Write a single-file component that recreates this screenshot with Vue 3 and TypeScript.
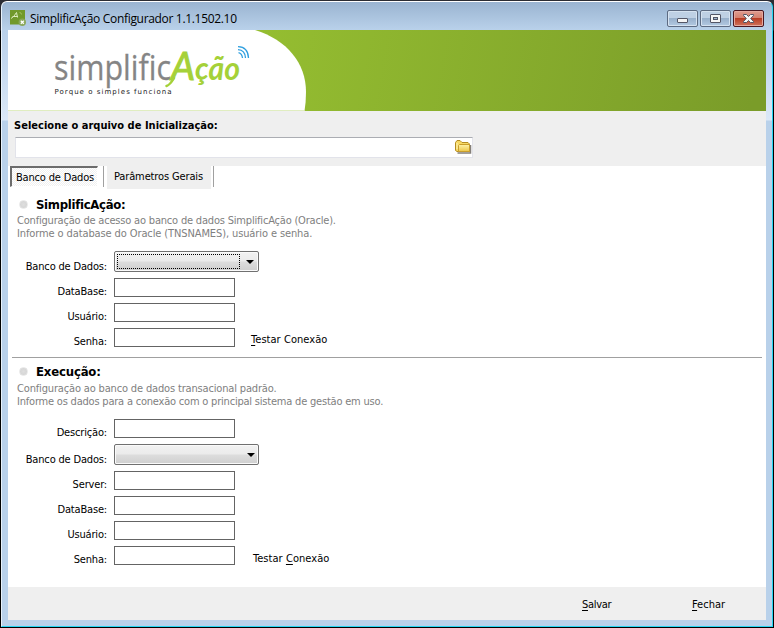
<script setup lang="ts">
import { ref } from 'vue'

interface Field {
  label: string
  kind: 'text' | 'combo'
  focused?: boolean
  action?: { before: string; key: string; after: string }
}
interface Section {
  id: string
  title: string
  lines: string[]
  fields: Field[]
}

const activeTab = ref(0)

const sections: Section[] = [
  {
    id: 'app',
    title: 'SimplificAção:',
    lines: [
      'Configuração de acesso ao banco de dados SimplificAção (Oracle).',
      'Informe o database do Oracle (TNSNAMES), usuário e senha.',
    ],
    fields: [
      { label: 'Banco de Dados:', kind: 'combo', focused: true },
      { label: 'DataBase:', kind: 'text' },
      { label: 'Usuário:', kind: 'text' },
      { label: 'Senha:', kind: 'text', action: { before: '', key: 'T', after: 'estar Conexão' } },
    ],
  },
  {
    id: 'exec',
    title: 'Execução:',
    lines: [
      'Configuração ao banco de dados transacional padrão.',
      'Informe os dados para a conexão com o principal sistema de gestão em uso.',
    ],
    fields: [
      { label: 'Descrição:', kind: 'text' },
      { label: 'Banco de Dados:', kind: 'combo' },
      { label: 'Server:', kind: 'text' },
      { label: 'DataBase:', kind: 'text' },
      { label: 'Usuário:', kind: 'text' },
      { label: 'Senha:', kind: 'text', action: { before: 'Testar ', key: 'C', after: 'onexão' } },
    ],
  },
]
</script>

<template>
  <div class="desktop">
    <div class="window">
      <header class="titlebar">
        <svg class="app-icon" width="16" height="16" viewBox="0 0 16 16">
          <rect width="15" height="14.500" fill="#71992b" />
          <path d="M1 8.500 Q4 7 6.500 2.500 L7.500 7.500 M2.500 6.500 H8" fill="none" stroke="#dcebbd" stroke-width="1" />
          <path d="M9.500 2.500 q2 0 2 2" fill="none" stroke="#a9c86c" stroke-width=".8" />
          <circle cx="12.300" cy="12.300" r="3.700" fill="#8aa85a" />
          <path d="M10.800 10.800 l3 3 M13.800 10.800 l-3 3" stroke="#fff" stroke-width="1.300" />
        </svg>
        <span class="caption">SimplificAção Configurador 1.1.1502.10</span>
        <div class="controls">
          <button class="ctl" type="button">
            <svg class="min" width="13" height="7" viewBox="0 0 13 7"><rect x="1.500" y="1.500" width="10" height="4" rx=".5" fill="#f4f4f4" stroke="#535666" /></svg>
          </button>
          <button class="ctl" type="button">
            <svg width="13" height="11" viewBox="0 0 13 11"><rect x="1.500" y="1.500" width="10" height="8" rx=".5" fill="#f6f6f6" stroke="#535666" /><rect x="4.500" y="4.500" width="4" height="2" fill="#9fb5cd" stroke="#535666" /></svg>
          </button>
          <button class="ctl close" type="button">
            <svg width="13" height="11" viewBox="0 0 13 11"><path d="M1.500 1.500 H4.500 L6.500 3.500 L8.500 1.500 H11.500 V2.500 L8.700 5.500 L11.500 8.500 V9.500 H8.500 L6.500 7.500 L4.500 9.500 H1.500 V8.500 L4.300 5.500 L1.500 2.500 Z" fill="#f6f6f6" stroke="#535666" /></svg>
          </button>
        </div>
      </header>

      <main class="client">
        <div class="banner">
          <svg width="758" height="81" viewBox="0 0 758 81">
            <defs>
              <linearGradient id="green" x1="0" y1="0" x2="1" y2=".02">
                <stop offset=".3" stop-color="#96bf31" />
                <stop offset="1" stop-color="#7a9c29" />
              </linearGradient>
            </defs>
            <rect width="758" height="81" fill="url(#green)" />
            <path d="M0 0 H247 C279 10 298 33 298 62 Q298 72 296.500 81 H0 Z" fill="#fff" />
            <path d="M0 80.500 H296" stroke="#e0edc0" />
            <text class="logo-gray" x="46" y="50" textLength="117" lengthAdjust="spacingAndGlyphs">simplific</text>
            <text class="logo-green capital" x="163" y="50" textLength="24" lengthAdjust="spacingAndGlyphs">A</text>
            <text class="logo-green" x="187" y="50" textLength="45" lengthAdjust="spacingAndGlyphs">ção</text>
            <path d="M158.500 56 Q162 55 166 48" fill="none" stroke="#a5d138" stroke-width="2.500" stroke-linecap="round" />
            <text class="tagline" x="46.500" y="64" textLength="117">Porque o simples funciona</text>
            <g fill="none" stroke="#2f9fdf" stroke-width="1.300">
              <path d="M230 16.700 Q240 17 240.500 28" />
              <path d="M230 19.700 Q237 20 237.500 28" />
              <path d="M230.500 22.700 Q234 23.500 234.500 28" />
            </g>
          </svg>
        </div>

        <section class="file-panel">
          <label class="file-label">Selecione o arquivo de Inicialização:</label>
          <div class="file-box">
            <svg width="17" height="15" viewBox="0 0 17 15">
              <defs>
                <linearGradient id="folder" x1="0" y1="0" x2="0" y2="1">
                  <stop offset="0" stop-color="#fff3a8" />
                  <stop offset="1" stop-color="#ecc649" />
                </linearGradient>
              </defs>
              <path d="M2.500 13 H15.500 V5" fill="none" stroke="#85807a" stroke-width="1.500" />
              <path d="M.5 10.500 V2.500 L2 .5 H5 L7 2.500 H13 L14.500 4 V11.500 H2 Z" fill="#f7d964" stroke="#b48c22" />
              <path d="M3.500 11.500 V5.500 L4.500 4.500 H14.500 V11.500 Z" fill="url(#folder)" stroke="#c99e2c" />
              <path d="M2 3 V9" stroke="#fff5b8" />
            </svg>
          </div>
        </section>

        <nav class="tabs">
          <button class="tab" :class="{ active: activeTab === 0 }" type="button" @click="activeTab = 0">Banco de Dados</button>
          <i class="divider"></i>
          <button class="tab second" :class="{ active: activeTab === 1 }" type="button" @click="activeTab = 1">Parâmetros Gerais</button>
          <i class="divider"></i>
        </nav>

        <section v-for="s in sections" :key="s.id" class="group" :class="s.id">
          <h2><i class="dot"></i><span>{{ s.title }}</span></h2>
          <p v-for="(l, i) in s.lines" :key="l" :class="'line' + i">{{ l }}</p>
          <div class="fields">
            <div v-for="f in s.fields" :key="f.label" class="field" :class="f.kind">
              <span class="label">{{ f.label }}</span>
              <div v-if="f.kind === 'combo'" class="combo-box" :class="{ focused: f.focused }">
                <span class="combo-value"></span>
                <svg width="8" height="4" viewBox="0 0 8 4"><path d="M0 0 H8 L4 4 Z" fill="#000" /></svg>
              </div>
              <div v-else class="input"></div>
              <span v-if="f.action" class="action">{{ f.action.before }}<u>{{ f.action.key }}</u>{{ f.action.after }}</span>
            </div>
          </div>
        </section>

        <footer class="footer">
          <span class="save"><u>S</u>alvar</span>
          <span class="exit"><u>F</u>echar</span>
        </footer>
      </main>
    </div>
  </div>
</template>

<style>
body {
  background: #000;
  overflow: hidden;
}
</style>

<style scoped>
* {
  box-sizing: border-box;
}
.desktop {
  width: 774px;
  height: 628px;
  padding: 1px;
  background: linear-gradient(#2b2c33 0 30px, #000 31px);
  font: 11px/13px "DejaVu Sans Condensed", "DejaVu Sans", sans-serif;
  font-stretch: condensed;
  color: #000;
}
.window {
  width: 772px;
  height: 626px;
  border: 1px solid #25d5f2;
  border-top-color: #fff;
  border-left-color: #e8f2fb;
  border-radius: 6px 6px 0 0;
  background: linear-gradient(#9ab4d1 0, #b9d1ea 28px, #c3d7ee 60px, #dbe8f7 118px, #b9d1ea 119px);
  display: flex;
  flex-direction: column;
  padding: 0 6px 6px;
}
.titlebar {
  height: 28px;
  flex: none;
  display: flex;
  align-items: flex-start;
}
.app-icon {
  margin: 8px 0 0 2px;
}
.caption {
  margin: 8px 0 0 4px;
  font: 12px/17px "Open Sans", sans-serif;
  letter-spacing: -0.32px;
  white-space: nowrap;
}
.controls {
  display: flex;
  gap: 2px;
  margin: 8px 2px 0 auto;
}
.ctl {
  width: 31px;
  height: 17px;
  padding: 0;
  display: flex;
  align-items: center;
  justify-content: center;
  border: 1px solid #5d6b82;
  border-radius: 2px;
  box-shadow: inset 0 0 0 1px #d5e2f0;
  background: linear-gradient(#bed0e4 0 45%, #98b0cb 50%, #b3cae2);
}
.min {
  margin-top: 4px;
}
.close {
  border-color: #4b1720;
  box-shadow: inset 0 0 0 1px #e5a89e;
  background: linear-gradient(#df9c90 0, #d5816f 45%, #b93d25 50%, #cf735c);
}
.client {
  width: 758px;
  height: 590px;
  background: #fff;
  display: flex;
  flex-direction: column;
}
.banner,
.banner svg {
  display: block;
  height: 81px;
}
.logo-gray {
  font: 34.5px "Open Sans", sans-serif;
  fill: #858585;
  stroke: #858585;
  stroke-width: 0.3px;
}
.logo-green {
  font: italic bold 33px "Lato", sans-serif;
  fill: #a5d138;
}
.capital {
  font-size: 38px;
  font-weight: normal;
  stroke: #a5d138;
  stroke-width: 1px;
}
.tagline {
  font: 7px "DejaVu Sans", sans-serif;
  fill: #222;
}
.file-panel {
  height: 55px;
  background: #efefef;
  padding: 8px 7px 0 7px;
}
.file-label {
  display: block;
  height: 13px;
  font-weight: bold;
  white-space: nowrap;
  letter-spacing: 0.02px;
  margin-left: -1px;
}
.file-box {
  width: 458px;
  height: 21px;
  margin-top: 5px;
  background: #fff;
  border: 1px solid #e2e3ea;
  border-top-color: #abadb3;
  display: flex;
  justify-content: flex-end;
  padding: 2px 0 0 0;
}
.tabs {
  height: 23px;
  display: flex;
  padding-left: 2px;
}
.tab {
  padding: 0;
  border: 0;
  font: inherit;
  color: #000;
  background: #efefef;
  height: 23px;
  width: 104px;
  white-space: nowrap;
  letter-spacing: -0.17px;
}
.tab.active {
  width: 88px;
  height: 21px;
  padding: 0 0 0 1px;
  border: 1px solid #fff;
  border-top: 2px solid #6c6c6c;
  border-left: 2px solid #6c6c6c;
  background: repeating-conic-gradient(#f0f0f0 0 25%, #fff 0 50%) 0 0 / 2px 2px;
}
.second {
  padding: 0 1px 2px 0;
  letter-spacing: -0.13px;
}
.divider {
  width: 1px;
  height: 21px;
  margin: 0 3px 0 5px;
  background: #a0a0a0;
}
.second + .divider {
  margin-left: 2px;
}
.group {
  padding: 8px 0 0 9px;
}
.app {
  height: 168px;
}
.exec {
  height: 230px;
  margin: 0 4px;
  padding: 6px 0 0 5px;
  border-top: 1px solid #a0a0a0;
}
h2 {
  display: flex;
  align-items: center;
  gap: 8px;
  height: 15px;
  margin: 0 0 2px 2px;
  font-size: 13px;
  line-height: 15px;
  letter-spacing: -0.3px;
}
.exec h2 {
  margin-bottom: 3px;
  letter-spacing: -0.17px;
}
.dot {
  width: 9px;
  height: 9px;
  border-radius: 50%;
  background: radial-gradient(#dedede, #d2d2d2);
  border: 1px solid #e6e6e6;
}
p {
  margin: 0;
  height: 13px;
  color: #808080;
  white-space: nowrap;
  letter-spacing: -0.19px;
}
.app .line1 {
  letter-spacing: -0.11px;
}
.exec .line0 {
  letter-spacing: -0.16px;
}
.exec .line1 {
  letter-spacing: -0.205px;
}
.fields {
  display: flex;
  flex-direction: column;
  gap: 6px;
  padding-top: 11px;
}
.field {
  display: flex;
  height: 19px;
}
.field.combo {
  height: 21px;
}
.label {
  width: 90px;
  margin-right: 7px;
  padding-top: 7px;
  text-align: right;
  white-space: nowrap;
  letter-spacing: -0.17px;
}
.combo .label {
  padding-top: 9px;
}
.input {
  width: 121px;
  height: 19px;
  border: 1px solid #646464;
  background: #fff;
}
.combo-box {
  width: 145px;
  height: 21px;
  border: 1px solid #707070;
  border-radius: 2px;
  box-shadow: inset 0 0 0 1px #fafafa;
  background: linear-gradient(#f2f2f2 0, #ebebeb 48%, #dddddd 52%, #cfcfcf);
  display: flex;
  padding: 2px;
}
.combo-value {
  width: 123px;
  height: 15px;
  margin-right: 7px;
}
.combo-box svg {
  margin-top: 6px;
}
.focused .combo-value {
  border: 1px dotted #000;
  margin-right: 6px;
}
.action {
  padding: 5px 0 0 16px;
  white-space: nowrap;
  letter-spacing: 0.05px;
}
.exec .action {
  padding-top: 6px;
  padding-left: 18px;
}
.footer {
  height: 33px;
  background: #efefef;
  display: flex;
  padding: 11px 0 0 574px;
}
.save {
  width: 110px;
  letter-spacing: -0.3px;
}
u {
  text-underline-offset: 2px;
}
</style>
